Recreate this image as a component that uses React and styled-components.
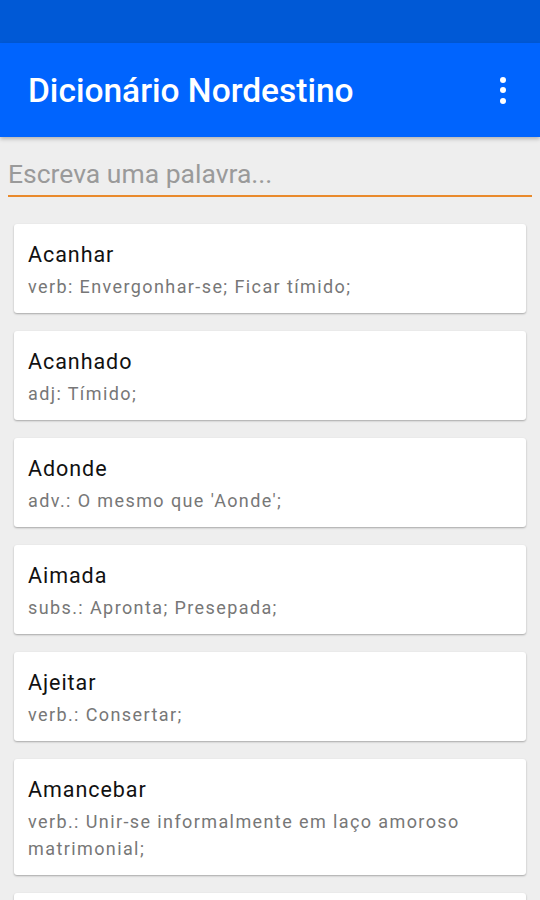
import React, { useState } from "react"
import styled, { createGlobalStyle } from "styled-components"

const GlobalStyle = createGlobalStyle`
  html, body {
    margin: 0;
    padding: 0;
    background: #eeeeee;
    font-family: Roboto, "Noto Sans", sans-serif;
  }
`

const Screen = styled.div`
  width: 540px;
  height: 900px;
  overflow: hidden;
  background: #eeeeee;
  display: flex;
  flex-direction: column;
`

const StatusBar = styled.div`
  height: 43px;
  background: #0059d6;
  flex-shrink: 0;
`

const AppBar = styled.header`
  height: 94px;
  background: #0064fe;
  display: flex;
  align-items: center;
  justify-content: space-between;
  padding: 0 34px 0 28px;
  box-shadow: 0 2px 4px rgba(0, 0, 0, 0.25);
  flex-shrink: 0;
  position: relative;
  z-index: 1;
`

const Title = styled.h1`
  margin: 0;
  color: #fff;
  font-size: 33.5px;
  font-weight: 500;
`

const MenuButton = styled.div`
  display: flex;
  flex-direction: column;
  gap: 4.5px;
  cursor: pointer;
`

const Dot = styled.span`
  width: 6px;
  height: 6px;
  border-radius: 50%;
  background: #fff;
`

const SearchWrap = styled.div`
  padding: 15px 8px 0;
  flex-shrink: 0;
`

const SearchInput = styled.input`
  display: block;
  width: 100%;
  height: 45px;
  box-sizing: border-box;
  border: none;
  border-bottom: 2px solid #e98a2c;
  background: transparent;
  font-family: Roboto, "Noto Sans", sans-serif;
  font-size: 26.5px;
  color: #333;
  padding: 0;
  outline: none;
  caret-color: #e98a2c;

  &::placeholder {
    color: #9a9a9a;
  }
`

const List = styled.ul`
  list-style: none;
  margin: 0;
  padding: 27px 14px 0;
  display: flex;
  flex-direction: column;
  gap: 18px;
`

const Card = styled.li`
  background: #fff;
  border-radius: 3px;
  box-shadow: 0 1px 2px rgba(0, 0, 0, 0.3);
  padding: 17px 14px 13.5px;
`

const Word = styled.div`
  font-size: 21.5px;
  letter-spacing: 0.95px;
  color: #111;
  line-height: 28px;
`

const Meaning = styled.div`
  font-size: 18px;
  letter-spacing: 1.4px;
  color: #777;
  line-height: 27px;
  margin-top: 3.5px;
  padding-right: 30px;
`

const entries = [
  { word: "Acanhar", meaning: "verb: Envergonhar-se; Ficar tímido;" },
  { word: "Acanhado", meaning: "adj: Tímido;" },
  { word: "Adonde", meaning: "adv.: O mesmo que 'Aonde';" },
  { word: "Aimada", meaning: "subs.: Apronta; Presepada;" },
  { word: "Ajeitar", meaning: "verb.: Consertar;" },
  {
    word: "Amancebar",
    meaning: "verb.: Unir-se informalmente em laço amoroso matrimonial;",
  },
  { word: "Amarrado", meaning: "adj.: Sovina;" },
]

const App = () => {
  const [query, setQuery] = useState("")

  return (
    <>
      <GlobalStyle />
      <Screen>
        <StatusBar />
        <AppBar>
          <Title>Dicionário Nordestino</Title>
          <MenuButton>
            <Dot />
            <Dot />
            <Dot />
          </MenuButton>
        </AppBar>
        <SearchWrap>
          <SearchInput
            autoFocus
            value={query}
            onChange={(e) => setQuery(e.target.value)}
            placeholder="Escreva uma palavra..."
          />
        </SearchWrap>
        <List>
          {entries.map((e) => (
            <Card key={e.word}>
              <Word>{e.word}</Word>
              <Meaning>{e.meaning}</Meaning>
            </Card>
          ))}
        </List>
      </Screen>
    </>
  )
}

export default App
